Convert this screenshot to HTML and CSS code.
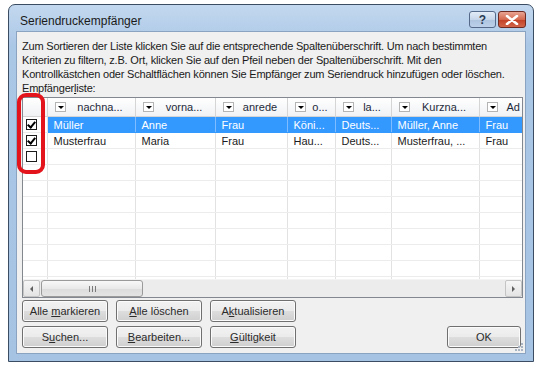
FILE: index.html
```html
<!DOCTYPE html>
<html lang="de">
<head>
    <meta charset="UTF-8">
    <title>Seriendruckempfänger</title>
    <link rel="stylesheet" href="styles.css">
</head>
<body>
    <div class="window">
        <div class="titlebar">
            <span class="title">Seriendruckempfänger</span>
            <span class="cap-btn help">?</span>
            <span class="cap-btn close">
                <svg width="14" height="10" viewBox="0 0 14 10"><path d="M2 1 L12 9 M12 1 L2 9" stroke="#fff" stroke-width="2.6" stroke-linecap="round"/></svg>
            </span>
        </div>

        <div class="client">
            <p class="intro">
                <span>Zum Sortieren der Liste klicken Sie auf die entsprechende Spaltenüberschrift. Um nach bestimmten</span>
                <span>Kriterien zu filtern, z.B. Ort, klicken Sie auf den Pfeil neben der Spaltenüberschrift. Mit den</span>
                <span>Kontrollkästchen oder Schaltflächen können Sie Empfänger zum Seriendruck hinzufügen oder löschen.</span>
            </p>
            <div class="label">Empfänger<u>l</u>iste:</div>

            <div class="list">
                <div class="grid-wrap">
                    <table class="grid">
                        <colgroup>
                            <col style="width:24px"><col style="width:88px"><col style="width:80px"><col style="width:72px">
                            <col style="width:48px"><col style="width:56px"><col style="width:88px"><col style="width:80px">
                        </colgroup>
                        <thead>
                            <tr>
                                <th></th>
                                <th><div class="hd"><span class="dd"></span><span class="ht">nachna...</span></div></th>
                                <th><div class="hd"><span class="dd"></span><span class="ht">vorna...</span></div></th>
                                <th><div class="hd"><span class="dd"></span><span class="ht">anrede</span></div></th>
                                <th><div class="hd"><span class="dd"></span><span class="ht">o...</span></div></th>
                                <th><div class="hd"><span class="dd"></span><span class="ht">la...</span></div></th>
                                <th><div class="hd"><span class="dd"></span><span class="ht">Kurzna...</span></div></th>
                                <th><div class="hd"><span class="dd"></span><span class="ht left">Ad</span></div></th>
                            </tr>
                        </thead>
                        <tbody>
                            <tr class="selected">
                                <td class="chk"><span class="box checked"></span></td>
                                <td>Müller</td><td>Anne</td><td>Frau</td><td>Köni...</td><td>Deuts...</td><td>Müller, Anne</td><td>Frau</td>
                            </tr>
                            <tr>
                                <td class="chk"><span class="box checked"></span></td>
                                <td>Musterfrau</td><td>Maria</td><td>Frau</td><td>Hau...</td><td>Deuts...</td><td>Musterfrau, ...</td><td>Frau</td>
                            </tr>
                            <tr>
                                <td class="chk"><span class="box"></span></td>
                                <td></td><td></td><td></td><td></td><td></td><td></td><td></td>
                            </tr>
                            <tr><td></td><td></td><td></td><td></td><td></td><td></td><td></td><td></td></tr>
                            <tr><td></td><td></td><td></td><td></td><td></td><td></td><td></td><td></td></tr>
                            <tr><td></td><td></td><td></td><td></td><td></td><td></td><td></td><td></td></tr>
                            <tr><td></td><td></td><td></td><td></td><td></td><td></td><td></td><td></td></tr>
                            <tr><td></td><td></td><td></td><td></td><td></td><td></td><td></td><td></td></tr>
                            <tr><td></td><td></td><td></td><td></td><td></td><td></td><td></td><td></td></tr>
                            <tr><td></td><td></td><td></td><td></td><td></td><td></td><td></td><td></td></tr>
                            <tr><td></td><td></td><td></td><td></td><td></td><td></td><td></td><td></td></tr>
                        </tbody>
                    </table>
                </div>
                <div class="hscroll">
                    <span class="sb-btn"><span class="arrow-l"></span></span>
                    <span class="thumb"><span class="grip"></span></span>
                    <span class="track"></span>
                    <span class="sb-btn"><span class="arrow-r"></span></span>
                </div>
            </div>

            <div class="buttons">
                <button>Alle <u>m</u>arkieren</button>
                <button><u>A</u>lle löschen</button>
                <button>A<u>k</u>tualisieren</button>
                <button>S<u>u</u>chen...</button>
                <button><u>B</u>earbeiten...</button>
                <button><u>G</u>ültigkeit</button>
                <button class="ok">OK</button>
            </div>

            <!-- red marker drawn over the checkbox column -->
            <div class="marker"></div>
            <svg class="grip-corner" width="11" height="11" viewBox="0 0 11 11">
                <g fill="#a9b4c2">
                    <rect x="8" y="2" width="2" height="2"/>
                    <rect x="5" y="5" width="2" height="2"/><rect x="8" y="5" width="2" height="2"/>
                    <rect x="2" y="8" width="2" height="2"/><rect x="5" y="8" width="2" height="2"/><rect x="8" y="8" width="2" height="2"/>
                </g>
            </svg>
        </div>
    </div>
</body>
</html>
```

FILE: styles.css
```css
body {
    margin: 0;
    background: #fff;
    font-family: Tahoma, "Liberation Sans", Arial, sans-serif;
    font-size: 11px;
    color: #000;
}
.window {
    box-sizing: border-box;
    margin: 4px 0 0 8px;
    width: 526px;
    height: 358px;
    border: 1px solid #3a4d63;
    border-radius: 7px 7px 0 0;
    background: linear-gradient(#c3d8ef, #abc7e6 40px, #a6c3e4);
    padding: 0 7px 7px;
}
.titlebar {
    height: 26px;
    display: flex;
    align-items: flex-start;
    gap: 2px;
}
.title {
    flex: 1;
    padding: 9px 0 0 4px;
    font-size: 12px;
    color: #1a1a1a;
}
.cap-btn {
    margin-top: 6px;
    height: 17px;
    box-sizing: border-box;
    border: 1px solid #55698a;
    border-radius: 3px;
    display: flex;
    align-items: center;
    justify-content: center;
}
.help {
    width: 27px;
    background: linear-gradient(#e3ecf7, #c6d6ea 50%, #aec3de 51%, #bcd0ea);
    color: #2a3b55;
    font-weight: bold;
    font-size: 12px;
}
.close {
    width: 28px;
    border-color: #6c2a22;
    background: linear-gradient(#e8a493, #d4694f 50%, #c23f25 51%, #d1654a);
}
.client {
    position: relative;
    box-sizing: border-box;
    height: 323px;
    background: #f0f0f0;
    border: 1px solid #8aa3c0;
    padding: 7px 0 0 5px;
    letter-spacing: -0.2px;
    color: #1a1a1a;
}
.intro {
    margin: 0;
    line-height: 14px;
}
.intro span {
    display: block;
    white-space: nowrap;
}
.label {
    line-height: 14px;
}
.list {
    margin-top: 2px;
    width: 501px;
    height: 201px;
    box-sizing: border-box;
    border: 1px solid #828790;
    background: #fff;
    display: flex;
    flex-direction: column;
    letter-spacing: 0;
}
.grid-wrap {
    flex: 1;
    overflow: hidden;
}
.grid {
    border-collapse: collapse;
    table-layout: fixed;
    width: 536px;
}
.grid th {
    height: 18px;
    padding: 0;
    background: linear-gradient(#ffffff, #f7f8f9 50%, #f1f2f4);
    border-right: 1px solid #d5d5d5;
    border-bottom: 1px solid #d5d5d5;
    font-weight: normal;
    color: #1e2a3a;
}
.hd {
    display: flex;
    align-items: center;
    padding-left: 7px;
}
.dd {
    width: 11px;
    height: 10px;
    box-sizing: border-box;
    border: 1px solid #b4b4b4;
    background: #fff;
    position: relative;
    flex: none;
}
.dd::after {
    content: "";
    position: absolute;
    left: 2px;
    top: 3px;
    border-left: 3px solid transparent;
    border-right: 3px solid transparent;
    border-top: 3px solid #000;
}
.ht {
    flex: 1;
    text-align: center;
    white-space: nowrap;
    overflow: hidden;
}
.ht.left {
    text-align: left;
    padding-left: 9px;
}
.grid td {
    height: 15px;
    padding: 0 0 0 6px;
    border-right: 1px solid #e2e2e2;
    border-bottom: 1px solid #ececec;
    white-space: nowrap;
    overflow: hidden;
    color: #1b1b22;
}
.grid td.chk {
    padding-left: 3px;
}
.grid tr.selected td {
    background: #3399ff;
    color: #fff;
    border-right-color: #7fbcff;
    border-bottom-color: #3399ff;
}
.grid tr.selected td.chk {
    background: #fff;
    border-right-color: #e2e2e2;
    border-bottom-color: #ececec;
}
.box {
    display: block;
    width: 11px;
    height: 11px;
    box-sizing: border-box;
    border: 1px solid #1c1c1c;
    background: #fff;
    position: relative;
}
.box.checked::after {
    content: "";
    position: absolute;
    left: 2px;
    top: 0px;
    width: 3px;
    height: 6px;
    border-right: 2px solid #000;
    border-bottom: 2px solid #000;
    transform: rotate(40deg);
}
.hscroll {
    height: 17px;
    display: flex;
    background: #ececec;
    border-top: 1px solid #f4f4f4;
}
.sb-btn {
    width: 17px;
    box-sizing: border-box;
    border: 1px solid #c4c4c4;
    border-radius: 2px;
    background: linear-gradient(#f6f6f6, #e4e4e4);
    display: flex;
    align-items: center;
    justify-content: center;
}
.arrow-l {
    border-top: 3px solid transparent;
    border-bottom: 3px solid transparent;
    border-right: 3px solid #606060;
}
.arrow-r {
    border-top: 3px solid transparent;
    border-bottom: 3px solid transparent;
    border-left: 3px solid #606060;
}
.thumb {
    width: 102px;
    margin-left: 1px;
    box-sizing: border-box;
    border: 1px solid #9a9a9a;
    border-radius: 3px;
    background: linear-gradient(#f8f8f8, #e9e9e9 50%, #dcdcdc 51%, #e4e4e4);
    display: flex;
    align-items: center;
    justify-content: center;
}
.grip {
    width: 7px;
    height: 6px;
    background: repeating-linear-gradient(90deg, #7a7a7a 0 1px, transparent 1px 3px);
}
.track {
    flex: 1;
}
.buttons {
    margin-top: 2px;
    width: 499px;
    display: grid;
    grid-template-columns: 86px 86px 86px 1fr;
    grid-auto-rows: 22px;
    column-gap: 8px;
    row-gap: 4px;
    letter-spacing: 0;
}
.buttons button:nth-child(4) {
    grid-column: 1;
}
.buttons .ok {
    grid-column: 4;
    grid-row: 2;
    justify-self: end;
    width: 74px;
}
button {
    font-family: Tahoma, "Liberation Sans", Arial, sans-serif;
    font-size: 11px;
    color: #2b2b2b;
    padding: 0;
    border: 1px solid #707070;
    border-radius: 3px;
    background: linear-gradient(#f2f2f2, #ebebeb 50%, #dddddd 51%, #cfcfcf);
    box-shadow: inset 0 0 0 1px #fbfbfb;
}
.marker {
    position: absolute;
    left: 0;
    top: 61px;
    width: 28px;
    height: 81px;
    box-sizing: border-box;
    border: 4px solid #e3141c;
    border-radius: 9px;
}
.grip-corner {
    position: absolute;
    right: 1px;
    bottom: 1px;
}
```
